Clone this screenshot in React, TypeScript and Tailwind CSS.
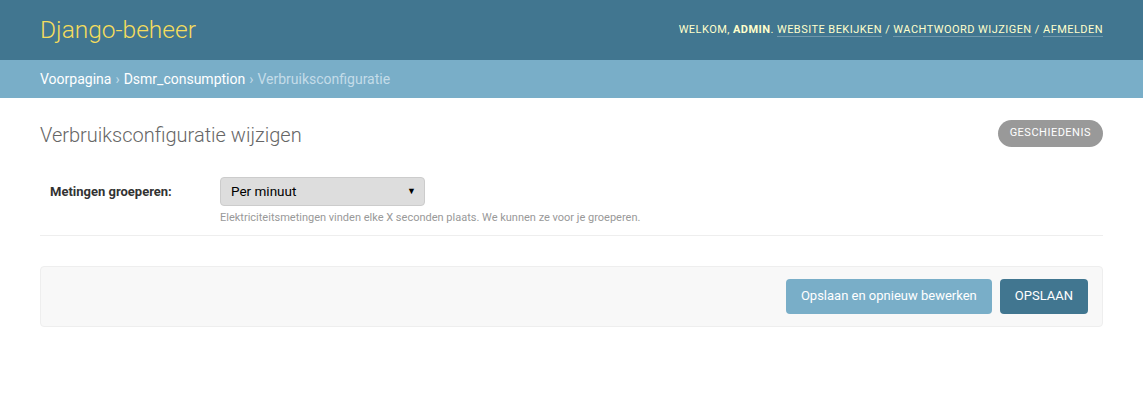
import React from "react";

export default function App() {
  return (
    <div className="min-h-[400px] bg-white text-[14px] text-[#333]" style={{ fontFamily: "Roboto, 'Lucida Grande', Verdana, Arial, sans-serif" }}>
      <div className="flex h-[60px] items-center justify-between bg-[#417690] px-[40px]">
        <h1 className="text-[24.5px] font-light text-[#f5dd5d]">Django-beheer</h1>
        <div className="text-[11px] uppercase tracking-[0.45px] text-[#ffc]">
          Welkom, <strong className="font-bold">admin</strong>.{" "}
          <a className="border-b border-white/25 text-[#ffc]">Website bekijken</a> /{" "}
          <a className="border-b border-white/25 text-[#ffc]">Wachtwoord wijzigen</a> /{" "}
          <a className="border-b border-white/25 text-[#ffc]">Afmelden</a>
        </div>
      </div>
      <div className="flex h-[38px] items-center bg-[#79aec8] px-[40px] text-[14px] text-[#c4dce8]">
        <a className="text-white">Voorpagina</a>
        <span className="mx-[4px]">›</span>
        <a className="text-white">Dsmr_consumption</a>
        <span className="mx-[4px]">›</span>
        <span>Verbruiksconfiguratie</span>
      </div>
      <div className="px-[40px] pt-[22px]">
        <div className="flex items-start justify-between">
          <h1 className="mt-[0px] text-[20px] font-light text-[#666]">Verbruiksconfiguratie wijzigen</h1>
          <a className="rounded-[15px] bg-[#999] px-[12px] py-[5px] text-[11px] uppercase tracking-[0.5px] text-white">Geschiedenis</a>
        </div>
        <div className="mt-[27px] flex border-b border-[#eee] px-[10px] pb-[8px] text-[13px]">
          <label className="w-[170px] pt-[5px] font-bold text-[#333]">Metingen groeperen:</label>
          <div>
            <div className="flex h-[29px] w-[205px] items-center justify-between rounded-[4px] border border-[#ccc] bg-[#dddddd] pl-[10px] pr-[8px] text-[13.5px] text-black">
              <span>Per minuut</span>
              <span className="text-[9px]">▼</span>
            </div>
            <div className="mt-[4px] text-[11px] text-[#999]">Elektriciteitsmetingen vinden elke X seconden plaats. We kunnen ze voor je groeperen.</div>
          </div>
        </div>
        <div className="mt-[30px] flex justify-end gap-[8px] rounded-[4px] border border-[#eee] bg-[#f8f8f8] px-[14px] py-[12px]">
          <button className="h-[35px] rounded-[4px] bg-[#79aec8] px-[15px] text-[13px] text-white">Opslaan en opnieuw bewerken</button>
          <button className="h-[35px] rounded-[4px] bg-[#417690] px-[15px] text-[13px] uppercase text-white">Opslaan</button>
        </div>
      </div>
    </div>
  );
}
